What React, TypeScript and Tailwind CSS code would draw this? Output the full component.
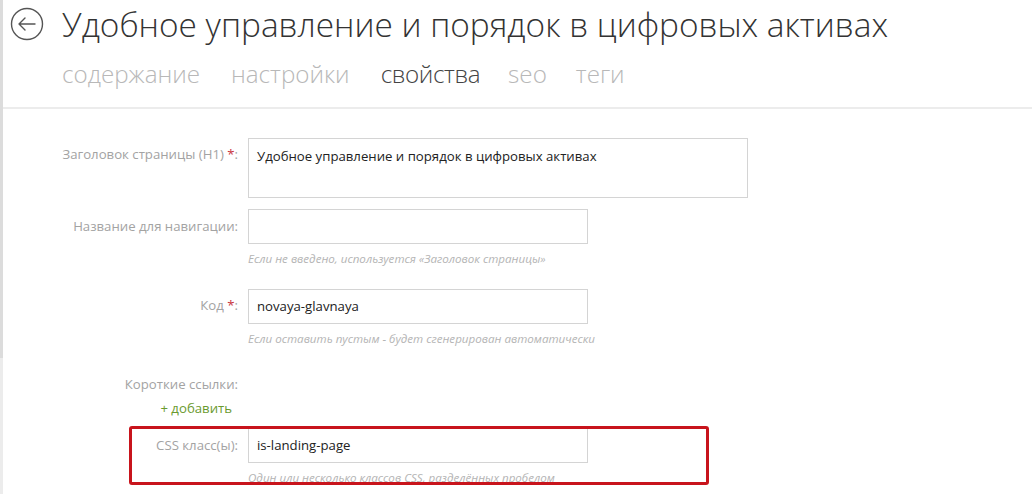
import React from "react";

const font = { fontFamily: '"Open Sans", "Noto Sans", sans-serif' };

function Label({ text, req }: { text: string; req?: boolean }) {
  return (
    <div className="w-[235px] shrink-0 text-right text-[13.2px] leading-[18px] text-[#a3a3a3]">
      {text}
      {req && <span className="text-[#c8323c]"> *</span>}:
    </div>
  );
}

function Hint({ children }: { children: React.ReactNode }) {
  return <div className="mt-[7px] text-[11.6px] leading-[16px] italic text-[#b4b4b4]">{children}</div>;
}

export default function App() {
  return (
    <div className="w-[1032px] h-[494px] overflow-hidden bg-white flex relative" style={font}>
      <div className="w-[3px] shrink-0 flex flex-col">
        <div className="h-[358px] bg-[#dcdcdc]" />
        <div className="flex-1 bg-[#ececec]" />
      </div>
      <div className="flex-1 flex flex-col">
        <div className="flex items-center pl-[7px] pt-[6px]">
          <svg width="34" height="34" viewBox="0 0 34 34" className="shrink-0">
            <circle cx="17" cy="17" r="15.5" fill="none" stroke="#555" strokeWidth="1.4" />
            <path d="M9 17 H25 M9 17 L15 11 M9 17 L15 23" fill="none" stroke="#555" strokeWidth="1.4" strokeLinecap="round" strokeLinejoin="round" />
          </svg>
          <h1 className="ml-[18px] text-[33.4px] leading-[36px] font-light text-[#333] whitespace-nowrap">
            Удобное управление и порядок в цифровых активах
          </h1>
        </div>
        <div className="flex pl-[59px] mt-[17px] text-[24.2px] leading-[30px] font-light text-[#b8b8b8]">
          <span>содержание</span>
          <span className="ml-[31px]">настройки</span>
          <span className="ml-[31px] text-[#444] tracking-[-0.4px]">свойства</span>
          <span className="ml-[28px]">seo</span>
          <span className="ml-[29px]">теги</span>
        </div>
        <div className="mt-[18px] h-[2px] bg-[#ececec]" />

        <div className="pt-[29px] flex flex-col relative text-[13px] text-[#222]">
          <div className="flex gap-[10px]">
            <div className="pt-[7px]"><Label text="Заголовок страницы (H1)" req /></div>
            <div className="w-[500px] h-[60px] border border-[#d4d4d4] px-[8px] pt-[7px] leading-[20px] text-[13.2px]">
              Удобное управление и порядок в цифровых активах
            </div>
          </div>

          <div className="flex gap-[10px] mt-[11px]">
            <div className="pt-[8px]"><Label text="Название для навигации" /></div>
            <div className="flex flex-col">
              <div className="w-[340px] h-[35px] border border-[#d4d4d4]" />
              <Hint>Если не введено, используется «Заголовок страницы»</Hint>
            </div>
          </div>

          <div className="flex gap-[10px] mt-[22px]">
            <div className="pt-[7px]"><Label text="Код" req /></div>
            <div className="flex flex-col">
              <div className="w-[340px] h-[35px] border border-[#d4d4d4] px-[8px] leading-[33px] text-[13.2px]">novaya-glavnaya</div>
              <Hint>Если оставить пустым - будет сгенерирован автоматически</Hint>
            </div>
          </div>

          <div className="flex flex-col mt-[28px] w-[235px] items-end">
            <div className="text-[13.2px] leading-[18px] text-[#a3a3a3]">Короткие ссылки:</div>
            <div className="mt-[6px] pr-[6px] text-[13.2px] leading-[18px] text-[#6a9a2e]">+ добавить</div>
          </div>

          <div className="flex gap-[10px] mt-[11px] relative">
            <div className="pt-[8px]"><Label text="CSS класс(ы)" /></div>
            <div className="flex flex-col">
              <div className="w-[340px] h-[35px] border border-[#d4d4d4] px-[8px] leading-[33px] text-[13.2px]">is-landing-page</div>
              <Hint>Один или несколько классов CSS, разделённых пробелом</Hint>
            </div>
            <div className="absolute left-[126px] top-[-2px] w-[580px] h-[59px] border-[3px] border-[#c8141c] rounded-[3px] pointer-events-none" />
          </div>
        </div>
      </div>
    </div>
  );
}
